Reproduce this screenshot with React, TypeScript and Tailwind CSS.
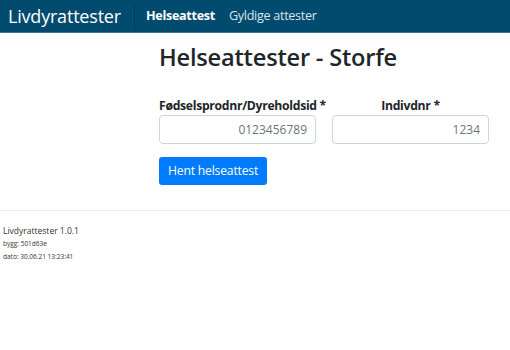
export default function App() {
  return (
    <div className="min-h-[350px] bg-white text-[#212529] font-['Open_Sans','Noto_Sans',sans-serif]">
      {/* navbar */}
      <nav className="h-[33px] bg-[#004b6e] border-b border-[#3a7a98] flex items-center">
        <div className="pl-[8px] pr-[13px] text-[18px] leading-none text-white tracking-[-0.2px] border-r border-[#003a56] h-[27px] flex items-center">
          Livdyrattester
        </div>
        <a className="ml-[11px] text-[12.6px] font-bold text-white tracking-[-0.3px]">Helseattest</a>
        <a className="ml-[14px] text-[12.6px] text-[#dbe6ec] tracking-[-0.3px]">Gyldige attester</a>
      </nav>

      <main className="pl-[159px] pt-[8px] pb-[25px]">
        <h1 className="text-[23.6px] font-semibold leading-[32px] tracking-[-0.2px]">Helseattester - Storfe</h1>

        <div className="mt-[24px] flex gap-[16px]">
          <div className="w-[157px]">
            <label className="block text-[12.2px] font-bold whitespace-nowrap leading-[18px] tracking-[-0.3px]">
              Fødselsprodnr/Dyreholdsid *
            </label>
            <input
              className="w-[157px] h-[29px] border border-[#ced4da] rounded-[4px] px-[8px] text-right text-[12px] placeholder:text-[#6c757d]"
              placeholder="0123456789"
            />
          </div>
          <div className="w-[157px]">
            <label className="block text-center text-[12.2px] font-bold leading-[18px] tracking-[-0.3px]">Indivdnr *</label>
            <input
              className="w-[157px] h-[29px] border border-[#ced4da] rounded-[4px] px-[8px] text-right text-[12px] placeholder:text-[#6c757d]"
              placeholder="1234"
            />
          </div>
        </div>

        <button className="mt-[13px] h-[28px] px-[9px] bg-[#007bff] text-white text-[12.2px] rounded-[3px] tracking-[-0.2px]">
          Hent helseattest
        </button>
      </main>

      <footer className="border-t border-[#e9ecef] pt-[13px] pl-[3px] text-[#333]">
        <div className="text-[8.5px] leading-[13px]">Livdyrattester 1.0.1</div>
        <div className="text-[6.5px] leading-[12px] mt-[1px]">bygg: 501d63e</div>
        <div className="text-[6.5px] leading-[12px] mt-[1px]">dato: 30.06.21 13:23:41</div>
      </footer>
    </div>
  )
}
